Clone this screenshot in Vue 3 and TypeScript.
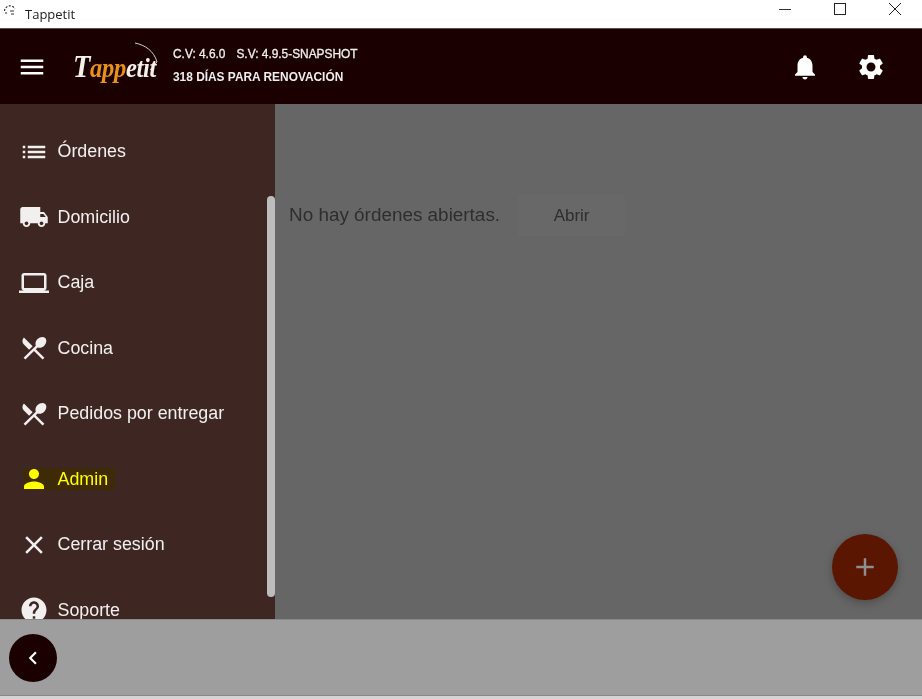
<script setup lang="ts">
interface MenuItem { label: string; path: string; active?: boolean }
const dining = 'M8.1 13.34l2.83-2.83L3.91 3.5c-1.56 1.56-1.56 4.09 0 5.66l4.19 4.18zm6.78-1.81c1.53.71 3.68.21 5.27-1.38 1.91-1.91 2.28-4.65.81-6.12-1.46-1.46-4.2-1.1-6.12.81-1.59 1.59-2.09 3.74-1.38 5.27L3.7 19.87l1.41 1.41L12 14.41l6.88 6.88 1.41-1.41L13.41 13l1.47-1.47z'
const items: MenuItem[] = [
  { label: 'Órdenes', path: 'M3 13h2v-2H3v2zm0 4h2v-2H3v2zm0-8h2V7H3v2zm4 4h14v-2H7v2zm0 4h14v-2H7v2zM7 7v2h14V7H7z' },
  { label: 'Domicilio', path: 'M20 8h-3V4H3c-1.1 0-2 .9-2 2v11h2c0 1.66 1.34 3 3 3s3-1.34 3-3h6c0 1.66 1.34 3 3 3s3-1.34 3-3h2v-5l-3-4zM6 18.5c-.83 0-1.5-.67-1.5-1.5s.67-1.5 1.5-1.5 1.5.67 1.5 1.5-.67 1.5-1.5 1.5zm13.5-9l1.96 2.5H17V9.5h2.5zm-1.5 9c-.83 0-1.5-.67-1.5-1.5s.67-1.5 1.5-1.5 1.5.67 1.5 1.5-.67 1.5-1.5 1.5z' },
  { label: 'Caja', path: 'M20 18c1.1 0 1.99-.9 1.99-2L22 6c0-1.1-.9-2-2-2H4c-1.1 0-2 .9-2 2v10c0 1.1.9 2 2 2H0v2h24v-2h-4zM4 6h16v10H4V6z' },
  { label: 'Cocina', path: dining },
  { label: 'Pedidos por entregar', path: dining },
  { label: 'Admin', active: true, path: 'M12 12c2.21 0 4-1.79 4-4s-1.79-4-4-4-4 1.79-4 4 1.79 4 4 4zm0 2c-2.67 0-8 1.34-8 4v2h16v-2c0-2.66-5.33-4-8-4z' },
  { label: 'Cerrar sesión', path: 'M19 6.41L17.59 5 12 10.59 6.41 5 5 6.41 10.59 12 5 17.59 6.41 19 12 13.41 17.59 19 19 17.59 13.41 12z' },
  { label: 'Soporte', path: 'M12 2C6.48 2 2 6.48 2 12s4.48 10 10 10 10-4.48 10-10S17.52 2 12 2zm1 17h-2v-2h2v2zm2.07-7.75l-.9.92C13.45 12.9 13 13.5 13 15h-2v-.5c0-1.1.45-2.1 1.17-2.83l1.24-1.26c.37-.36.59-.86.59-1.41 0-1.1-.9-2-2-2s-2 .9-2 2H8c0-2.21 1.79-4 4-4s4 1.79 4 4c0 .88-.36 1.68-.93 2.25z' },
]
</script>

<template>
  <div class="window">
    <div class="titlebar">
      <svg class="app-icon" width="16" height="14" viewBox="0 0 16 14">
        <g fill="none" stroke="#333" stroke-width="1.2" stroke-dasharray="2 1.5">
          <path d="M2.5 7A5.5 5.5 0 0 1 13 5" />
        </g>
        <path d="M9 10h3M3 9h2M8 7h4" stroke="#333" stroke-width="1" />
      </svg>
      <span class="app-title">Tappetit</span>
      <div class="win-controls">
        <svg width="14" height="14" viewBox="0 0 14 14"><path d="M1 7.5h12" stroke="#333" stroke-width="1" /></svg>
        <svg width="14" height="14" viewBox="0 0 14 14"><rect x="1.5" y="1.5" width="11" height="11" fill="none" stroke="#222" stroke-width="1" /></svg>
        <svg width="14" height="14" viewBox="0 0 14 14"><path d="M1 1l12 12M13 1L1 13" stroke="#222" stroke-width="1" /></svg>
      </div>
    </div>

    <header class="header">
      <svg class="menu-icon" width="30" height="30" viewBox="0 0 24 24"><path fill="#fff" d="M3 18h18v-2H3v2zm0-5h18v-2H3v2zm0-7v2h18V6H3z" /></svg>
      <div class="logo">
        <svg class="logo-arc" width="30" height="32" viewBox="0 0 30 32"><path d="M2 1C12 3 21 9 24 20L17 28" fill="none" stroke="#cfcfcf" stroke-width="1" /></svg>
        <span class="logo-text"><span class="logo-t">T</span><span class="logo-app">app</span>etit</span>
      </div>
      <div class="versions">
        <div class="version-line"><span>C.V: 4.6.0</span><span>S.V: 4.9.5-SNAPSHOT</span></div>
        <div class="renew">318 DÍAS PARA RENOVACIÓN</div>
      </div>
      <div class="header-actions">
        <svg width="30" height="30" viewBox="0 0 24 24"><path fill="#fff" d="M12 22c1.1 0 2-.9 2-2h-4c0 1.1.89 2 2 2zm6-6v-5c0-3.07-1.64-5.64-4.5-6.32V4c0-.83-.67-1.5-1.5-1.5s-1.5.67-1.5 1.5v.68C7.63 5.36 6 7.92 6 11v5l-2 2v1h16v-1l-2-2z" /></svg>
        <svg width="30" height="30" viewBox="0 0 24 24"><path fill="#fff" d="M19.14 12.94c.04-.3.06-.61.06-.94 0-.32-.02-.64-.07-.94l2.03-1.58c.18-.14.23-.41.12-.61l-1.92-3.32c-.12-.22-.37-.29-.59-.22l-2.39.96c-.5-.38-1.03-.7-1.62-.94l-.36-2.54c-.04-.24-.24-.41-.48-.41h-3.84c-.24 0-.43.17-.47.41l-.36 2.54c-.59.24-1.13.57-1.62.94l-2.39-.96c-.22-.08-.47 0-.59.22L2.74 8.87c-.12.21-.08.47.12.61l2.03 1.58c-.05.3-.09.63-.09.94s.02.64.07.94l-2.03 1.58c-.18.14-.23.41-.12.61l1.92 3.32c.12.22.37.29.59.22l2.39-.96c.5.38 1.03.7 1.62.94l.36 2.54c.05.24.24.41.48.41h3.84c.24 0 .44-.17.47-.41l.36-2.54c.59-.24 1.13-.56 1.62-.94l2.39.96c.22.08.47 0 .59-.22l1.92-3.32c.12-.22.07-.47-.12-.61l-2.01-1.58zM12 15.6c-1.98 0-3.6-1.62-3.6-3.6s1.62-3.6 3.6-3.6 3.6 1.62 3.6 3.6-1.62 3.6-3.6 3.6z" /></svg>
      </div>
    </header>

    <div class="body">
      <nav class="sidebar">
        <a v-for="item in items" :key="item.label" class="item" :class="{ active: item.active }">
          <span class="item-inner">
            <svg width="30" height="30" viewBox="0 0 24 24"><path fill="currentColor" :d="item.path" /></svg>
            <span class="item-label">{{ item.label }}</span>
          </span>
        </a>
        <div class="scroll-thumb"></div>
      </nav>
      <main class="content">
        <div class="empty-row">
          <span class="empty-text">No hay órdenes abiertas.</span>
          <button class="open-btn">Abrir</button>
        </div>
        <button class="fab" aria-label="Agregar">
          <svg width="30" height="30" viewBox="0 0 24 24"><path fill="#8e8e8e" d="M19 13h-6v6h-2v-6H5v-2h6V5h2v6h6v2z" /></svg>
        </button>
      </main>
    </div>

    <footer class="footer">
      <button class="back" aria-label="Volver">
        <svg width="26" height="26" viewBox="0 0 24 24"><path fill="#fff" d="M15.41 7.41L14 6l-6 6 6 6 1.41-1.41L10.83 12z" /></svg>
      </button>
    </footer>
  </div>
</template>

<style scoped>
.window {
  width: 922px;
  height: 699px;
  display: flex;
  flex-direction: column;
  overflow: hidden;
  font-family: "Liberation Sans", Arial, sans-serif;
  background: #d4d4d4;
  filter: blur(0.3px);
}
.titlebar {
  height: 28px;
  flex: none;
  background: #fff;
  display: flex;
  align-items: center;
  padding-left: 2px;
  position: relative;
}
.app-icon { margin-bottom: 7px; }
.app-title {
  margin-left: 7px;
  font: 13px "Open Sans", sans-serif;
  color: #222;
}
.win-controls {
  margin-left: auto;
  margin-right: 20px;
  display: flex;
  gap: 41px;
  align-items: center;
  margin-bottom: 10px;
}
.header {
  height: 76px;
  flex: none;
  background: #1b0000;
  border-top: 1px solid #5c5050;
  box-sizing: border-box;
  display: flex;
  align-items: center;
  color: #fff;
  padding-left: 17px;
  padding-right: 36px;
}
.menu-icon { flex: none; }
.logo {
  position: relative;
  width: 85px;
  margin-left: 26px;
  height: 50px;
  display: flex;
  align-items: center;
}
.logo-text {
  font: italic bold 25px "Liberation Serif", serif;
  color: #f4f0ea;
  letter-spacing: -0.3px;
  margin-top: -1px;
  transform: scale(0.98, 1.12);
  transform-origin: left center;
}
.logo-t { font-size: 29px; }
.logo-app { color: #e8921a; }
.logo-arc {
  position: absolute;
  left: 60px;
  top: 0;
}
.versions {
  margin-left: 15px;
  display: flex;
  flex-direction: column;
  gap: 9px;
  font-size: 12px;
  line-height: 14px;
  color: #eee;
  margin-top: -3px;
}
.version-line {
  display: flex;
  gap: 11px;
  font-size: 11.9px;
  -webkit-text-stroke: 0.3px #eee;
}
.renew { font-weight: 700; font-size: 11.9px; }
.header-actions {
  margin-left: auto;
  display: flex;
  gap: 36px;
}
.body {
  flex: 1;
  min-height: 0;
  display: flex;
}
.sidebar {
  width: 275px;
  flex: none;
  background: #3e2723;
  position: relative;
  overflow: hidden;
  padding-top: 15px;
  box-sizing: border-box;
  color: #f2f0ef;
}
.item {
  height: 65.5px;
  display: flex;
  align-items: center;
  padding-left: 19px;
}
.item-inner {
  display: inline-flex;
  align-items: center;
  gap: 8.5px;
  height: 22px;
}
.item-label {
  font-size: 17.85px;
}
.active { color: #ffff00; }
.active .item-inner {
  background: #3f2a08;
  padding-right: 7px;
  margin-left: 4px;
}
.active svg { margin-left: -4px; }
.scroll-thumb {
  position: absolute;
  top: 92px;
  left: 267px;
  width: 8px;
  height: 401px;
  background: #bdbdbd;
  border-radius: 4px;
}
.content {
  flex: 1;
  min-width: 0;
  background: #666;
  position: relative;
  padding: 91px 0 0 14px;
  box-sizing: border-box;
}
.empty-row {
  display: flex;
  align-items: center;
  gap: 18px;
}
.empty-text {
  font-size: 18.9px;
  color: #2e2e2e;
  margin-top: -2px;
}
.open-btn {
  width: 107px;
  height: 41px;
  border: 0;
  border-radius: 2px;
  background: #686868;
  color: #2e2e2e;
  font: 17px "Liberation Sans", sans-serif;
}
.fab {
  position: absolute;
  left: 557px;
  top: 430px;
  width: 66px;
  height: 66px;
  padding: 0;
  border: 0;
  border-radius: 50%;
  background: #5a1600;
  display: flex;
  align-items: center;
  justify-content: center;
  box-shadow: 0 3px 8px rgba(0, 0, 0, 0.25);
}
.footer {
  height: 77px;
  flex: none;
  background: #9e9e9e;
  border-top: 1px solid #8a8a8a;
  border-bottom: 1px solid #888;
  margin-bottom: 3px;
  box-sizing: border-box;
  display: flex;
  align-items: center;
  padding-left: 9px;
}
.back {
  width: 48px;
  height: 48px;
  padding: 0;
  border: 0;
  border-radius: 50%;
  background: #1b0000;
  display: flex;
  align-items: center;
  justify-content: center;
}
</style>
